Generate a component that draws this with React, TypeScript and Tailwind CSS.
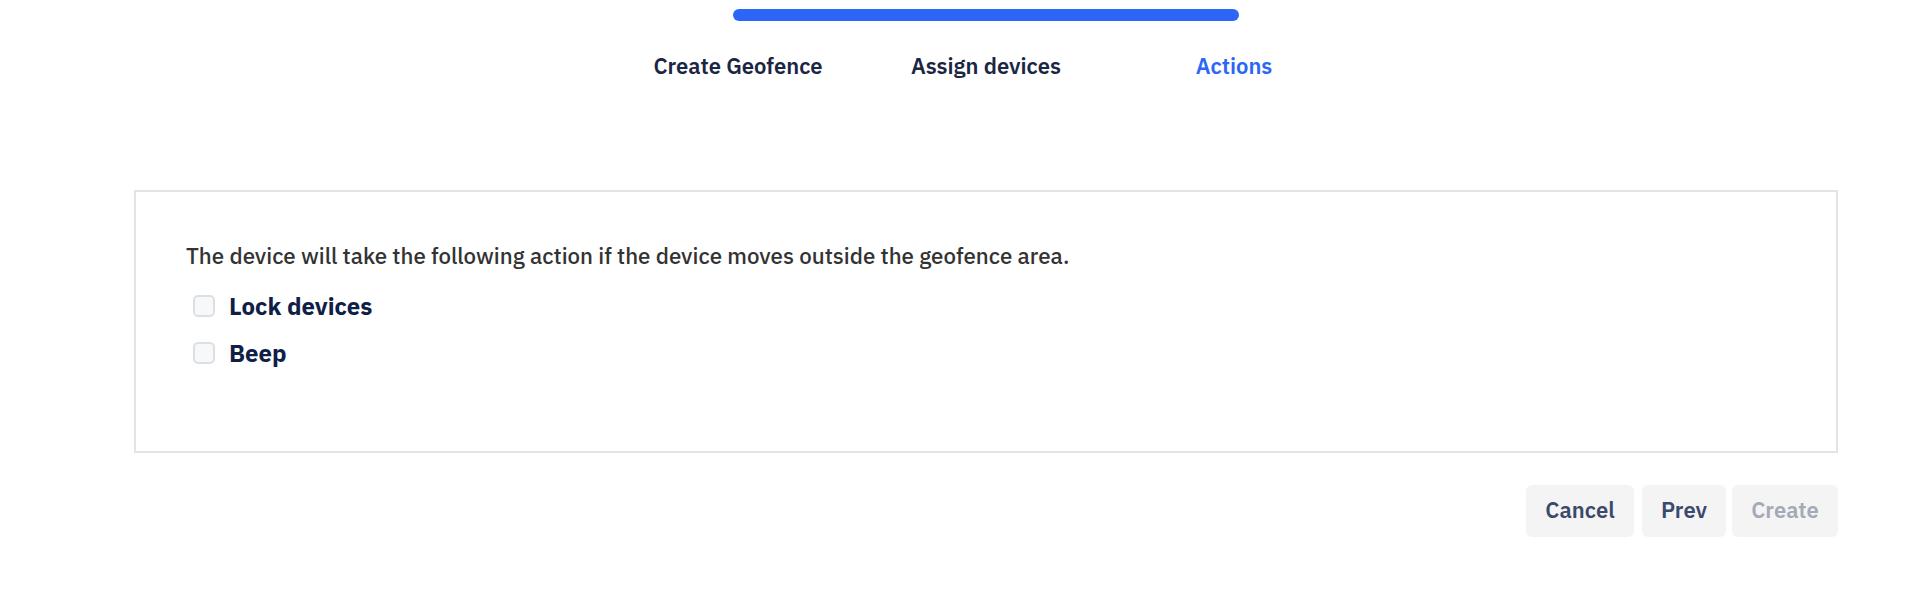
const steps = [
  { label: 'Create Geofence', active: false },
  { label: 'Assign devices', active: false },
  { label: 'Actions', active: true },
];

const actions = ['Lock devices', 'Beep'];

function Checkbox() {
  return (
    <span className="block w-[22px] h-[22px] shrink-0 rounded-[5px] border-2 border-[#dcdfe4] bg-[#f7f8fa]" />
  );
}

export default function App() {
  return (
    <div className="min-h-[592px] bg-white pl-[134px] pr-[94px] font-['IBM_Plex_Sans','Liberation_Sans',sans-serif]">
      {/* stepper */}
      <div className="w-[744px] mx-auto pt-[9px]">
        <div className="flex mx-[119px] h-3">
          <div className="flex-1 bg-[#2b66f6] rounded-l-full" />
          <div className="flex-1 bg-[#2b66f6] rounded-r-full" />
        </div>
        <div className="grid grid-cols-3 mt-[31px]">
          {steps.map((s) => (
            <div
              key={s.label}
              className={`text-center text-[22px] leading-[28px] font-semibold ${
                s.active ? 'text-[#2b66f6]' : 'text-[#1b2643]'
              }`}
            >
              {s.label}
            </div>
          ))}
        </div>
      </div>

      {/* actions card */}
      <div className="mt-[110px] border-2 border-[#e2e4e8] pl-[50px] pt-[50px] pb-[84px]">
        <p className="text-[22.3px] leading-[28px] font-medium text-[#333333]">
          The device will take the following action if the device moves outside the geofence area.
        </p>
        <div className="mt-[22px] flex flex-col gap-[19px]">
          {actions.map((a) => (
            <label key={a} className="flex items-center gap-[14px] pl-[7px] h-[28px]">
              <Checkbox />
              <span className="text-[24px] leading-[28px] font-bold text-[#0f1f47]">{a}</span>
            </label>
          ))}
        </div>
      </div>

      {/* footer buttons */}
      <div className="mt-[32px] flex justify-end">
        <button className="h-[52px] w-[108px] pb-1 rounded-md bg-[#f4f4f5] text-[22px] font-semibold text-[#3b4a6b]">
          Cancel
        </button>
        <button className="ml-2 h-[52px] w-[84px] pb-1 rounded-md bg-[#f4f4f5] text-[22px] font-semibold text-[#3b4a6b]">
          Prev
        </button>
        <button className="ml-[6px] h-[52px] w-[106px] pb-1 rounded-md bg-[#f4f4f5] text-[22px] font-semibold text-[#a3aab6]">
          Create
        </button>
      </div>
    </div>
  );
}
